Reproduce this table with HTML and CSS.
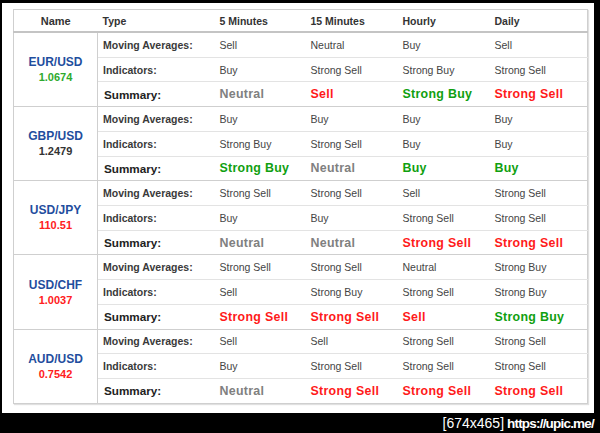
FILE: index.html
```html
<!DOCTYPE html>
<html>
<head>
<meta charset="utf-8">
<link rel="stylesheet" href="styles.css">
</head>
<body>
<div class="frame">
  <div class="sheet">
    <table class="tech">
      <colgroup>
        <col class="c-name"><col class="c-type"><col class="c-5m"><col class="c-15m"><col class="c-h"><col class="c-d">
      </colgroup>
      <thead>
        <tr><th class="name-h">Name</th><th>Type</th><th>5 Minutes</th><th>15 Minutes</th><th>Hourly</th><th>Daily</th></tr>
      </thead>
      <tbody>
        <tr class="ma"><td class="pair" rowspan="3"><div class="sym">EUR/USD</div><div class="px up">1.0674</div></td><td class="lbl">Moving Averages:</td><td>Sell</td><td>Neutral</td><td>Buy</td><td>Sell</td></tr>
        <tr class="ind"><td class="lbl">Indicators:</td><td>Buy</td><td>Strong Sell</td><td>Strong Buy</td><td>Strong Sell</td></tr>
        <tr class="sum"><td class="lbl">Summary:</td><td class="neu">Neutral</td><td class="sell">Sell</td><td class="buy">Strong Buy</td><td class="sell">Strong Sell</td></tr>

        <tr class="ma"><td class="pair" rowspan="3"><div class="sym">GBP/USD</div><div class="px flat">1.2479</div></td><td class="lbl">Moving Averages:</td><td>Buy</td><td>Buy</td><td>Buy</td><td>Buy</td></tr>
        <tr class="ind"><td class="lbl">Indicators:</td><td>Strong Buy</td><td>Strong Sell</td><td>Buy</td><td>Buy</td></tr>
        <tr class="sum"><td class="lbl">Summary:</td><td class="buy">Strong Buy</td><td class="neu">Neutral</td><td class="buy">Buy</td><td class="buy">Buy</td></tr>

        <tr class="ma"><td class="pair" rowspan="3"><div class="sym">USD/JPY</div><div class="px down">110.51</div></td><td class="lbl">Moving Averages:</td><td>Strong Sell</td><td>Strong Sell</td><td>Sell</td><td>Strong Sell</td></tr>
        <tr class="ind"><td class="lbl">Indicators:</td><td>Buy</td><td>Buy</td><td>Strong Sell</td><td>Strong Sell</td></tr>
        <tr class="sum"><td class="lbl">Summary:</td><td class="neu">Neutral</td><td class="neu">Neutral</td><td class="sell">Strong Sell</td><td class="sell">Strong Sell</td></tr>

        <tr class="ma"><td class="pair" rowspan="3"><div class="sym">USD/CHF</div><div class="px down">1.0037</div></td><td class="lbl">Moving Averages:</td><td>Strong Sell</td><td>Strong Sell</td><td>Neutral</td><td>Strong Buy</td></tr>
        <tr class="ind"><td class="lbl">Indicators:</td><td>Sell</td><td>Strong Buy</td><td>Strong Sell</td><td>Strong Buy</td></tr>
        <tr class="sum"><td class="lbl">Summary:</td><td class="sell">Strong Sell</td><td class="sell">Strong Sell</td><td class="sell">Sell</td><td class="buy">Strong Buy</td></tr>

        <tr class="ma"><td class="pair" rowspan="3"><div class="sym">AUD/USD</div><div class="px down">0.7542</div></td><td class="lbl">Moving Averages:</td><td>Sell</td><td>Sell</td><td>Strong Sell</td><td>Strong Sell</td></tr>
        <tr class="ind"><td class="lbl">Indicators:</td><td>Buy</td><td>Strong Sell</td><td>Strong Sell</td><td>Strong Sell</td></tr>
        <tr class="sum last"><td class="lbl">Summary:</td><td class="neu">Neutral</td><td class="sell">Strong Sell</td><td class="sell">Strong Sell</td><td class="sell">Strong Sell</td></tr>
      </tbody>
    </table>
  </div>
  <div class="mark"><span class="dim">[674x465]</span><span class="url">https://upic.me/</span></div>
</div>
</body>
</html>
```

FILE: styles.css
```css
html, body {
  margin: 0;
  padding: 0;
  background: #000;
}
body {
  width: 600px;
  height: 433px;
  overflow: hidden;
}
.frame {
  padding: 3px 6px 0 2px;
}
.sheet {
  background: #fff;
  width: 592px;
  height: 410px;
  box-sizing: border-box;
  padding: 6px 0 0 11px;
}
.tech {
  border-collapse: collapse;
  table-layout: fixed;
  width: 574px;
  font-family: "Liberation Sans", Arial, sans-serif;
  color: #333;
  border: 1px solid #cfcfcf;
  box-shadow: 1px 1px 1px rgba(0,0,0,0.12);
}
.c-name { width: 84px; }
.c-type { width: 117px; }
.c-5m { width: 91px; }
.c-15m { width: 92px; }
.c-h { width: 92px; }
.c-d { width: 98px; }
.tech th {
  height: 21px;
  padding: 0 0 0 5px;
  text-align: left;
  font-size: 10.5px;
  font-weight: bold;
  color: #333;
  border-bottom: 2px solid #c4c4c4;
  vertical-align: middle;
}
.tech th.name-h {
  text-align: center;
  padding: 0;
  font-size: 11px;
}
.tech td {
  height: 23.73px;
  padding: 0 0 0 5px;
  font-size: 10.5px;
  color: #444;
  border-bottom: 1px solid #e3e3e3;
  vertical-align: middle;
  white-space: nowrap;
}
.tech tr.sum td {
  border-bottom: 1px solid #cfcfcf;
}
.tech td.pair {
  text-align: center;
  padding: 0;
  border-right: 1px solid #cfcfcf;
  border-bottom: 1px solid #cfcfcf;
}
.sym {
  font-size: 12px;
  font-weight: bold;
  color: #1f4e9e;
  line-height: 15px;
}
.px {
  font-size: 11px;
  font-weight: bold;
  line-height: 14px;
}
.px.up { color: #2eaa2e; }
.px.flat { color: #333; }
.px.down { color: #ff2020; }
.tech td.lbl {
  font-weight: bold;
  color: #3a3a3a;
}
.tech tr.sum td.lbl {
  font-size: 11.7px;
  color: #222;
  padding-left: 6px;
}
.tech tr.sum td.neu,
.tech tr.sum td.sell,
.tech tr.sum td.buy {
  font-size: 12.4px;
  font-weight: bold;
  letter-spacing: 0.3px;
}
.neu { color: #808080 !important; }
.sell { color: #ff1a1a !important; }
.buy { color: #10a010 !important; }
.mark {
  display: flex;
  justify-content: flex-end;
  align-items: center;
  height: 20px;
  color: #fff;
  gap: 3px;
  font-family: "Liberation Sans", Arial, sans-serif;
}
.dim {
  font-size: 14px;
}
.url {
  font-size: 13.5px;
  font-weight: bold;
  letter-spacing: -0.8px;
}
```
